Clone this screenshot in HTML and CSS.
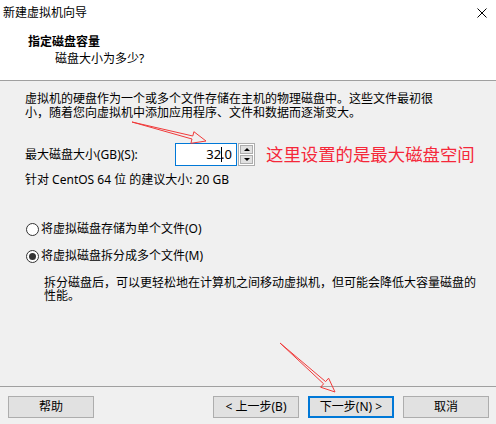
FILE: index.html
```html
<!DOCTYPE html>
<html lang="zh-CN">
<head>
<meta charset="utf-8">
<title>新建虚拟机向导</title>
<link rel="stylesheet" href="styles.css">
</head>
<body>
<div class="window">
  <header class="header">
    <div class="titlebar">
      <span class="title">新建虚拟机向导</span>
      <svg class="close" width="10" height="10" viewBox="0 0 10 10"><path d="M0.5 0.5 L9.5 9.5 M9.5 0.5 L0.5 9.5" stroke="#000" stroke-width="1" fill="none"/></svg>
    </div>
    <div class="heading">指定磁盘容量</div>
    <div class="subheading">磁盘大小为多少?</div>
  </header>

  <main class="content">
    <p class="intro">虚拟机的硬盘作为一个或多个文件存储在主机的物理磁盘中。这些文件最初很<br>小，随着您向虚拟机中添加应用程序、文件和数据而逐渐变大。</p>

    <div class="size-row">
      <span class="size-label">最大磁盘大小(GB)(S):</span>
      <div class="num-input">32<span class="caret"></span>.0</div>
      <div class="spinner">
        <span class="spin-btn"><span class="tri-up"></span></span>
        <span class="spin-btn"><span class="tri-down"></span></span>
      </div>
      <span class="annotation">这里设置的是最大磁盘空间</span>
    </div>

    <div class="recommend">针对 CentOS 64 位 的建议大小: 20 GB</div>

    <label class="radio-row first">
      <span class="radio"></span>
      <span>将虚拟磁盘存储为单个文件(O)</span>
    </label>
    <label class="radio-row second">
      <span class="radio checked"></span>
      <span>将虚拟磁盘拆分成多个文件(M)</span>
    </label>
    <p class="desc">拆分磁盘后，可以更轻松地在计算机之间移动虚拟机，但可能会降低大容量磁盘的<br>性能。</p>
  </main>

  <footer class="footer">
    <button class="btn">帮助</button>
    <div class="btn-group">
      <button class="btn">&lt; 上一步(B)</button>
      <button class="btn default">下一步(N) &gt;</button>
      <button class="btn">取消</button>
    </div>
  </footer>

  <svg class="arrows" width="496" height="424" viewBox="0 0 496 424">
    <polygon points="132,122 192.8,136 193.9,131.7 206,141 190.9,143.3 192,139" fill="none" stroke="#f03a3a" stroke-width="1" stroke-linejoin="miter"/>
    <polygon points="280,343 325.6,381.6 328.6,378.2 335,392 320.6,387.2 323.6,383.8" fill="none" stroke="#f03a3a" stroke-width="1" stroke-linejoin="miter"/>
  </svg>
</div>
</body>
</html>
```
FILE: styles.css
```css
html, body {
  margin: 0;
  padding: 0;
}
body {
  background: #f0f0f0;
  font-family: "Noto Sans", "Noto Sans CJK SC", sans-serif;
  font-size: 12px;
  color: #000;
}
.window {
  position: relative;
  width: 496px;
  height: 424px;
  display: flex;
  flex-direction: column;
  overflow: hidden;
}
.header {
  background: #fff;
  height: 80px;
  border-bottom: 1px solid #a0a0a0;
  flex: none;
}
.titlebar {
  height: 25px;
  display: flex;
  align-items: center;
  justify-content: space-between;
  padding: 0 9px 0 3px;
  line-height: 25px;
}
.close {
  display: block;
}
.heading {
  margin-top: 8px;
  padding-left: 28px;
  line-height: 17px;
  font-weight: bold;
}
.subheading {
  padding-left: 55px;
  line-height: 17px;
}
.content {
  flex: 1;
  padding: 11px 10px 0 25px;
}
.intro {
  margin: 0;
  line-height: 14px;
  white-space: nowrap;
}
.size-row {
  margin-top: 23px;
  display: flex;
  align-items: center;
  height: 22px;
}
.size-label {
  width: 150px;
  flex: none;
}
.num-input {
  box-sizing: border-box;
  width: 62px;
  height: 23px;
  border: 1px solid #0078d7;
  background: #fff;
  text-align: right;
  padding-right: 4px;
  font-size: 13px;
  line-height: 21px;
}
.caret {
  display: inline-block;
  width: 1px;
  height: 15px;
  background: #000;
  vertical-align: -3px;
  margin-right: -1px;
}
.spinner {
  margin-left: 1px;
  width: 17px;
  height: 23px;
  display: flex;
  flex-direction: column;
  box-sizing: border-box;
  border: 1px solid #adadad;
  background: #fff;
}
.spin-btn {
  flex: 1;
  margin: 1px;
  background: #e1e1e1;
  border: 1px solid #adadad;
  display: flex;
  align-items: center;
  justify-content: center;
}
.spin-btn + .spin-btn {
  margin-top: 0;
}
.tri-up {
  width: 0;
  height: 0;
  border-left: 3px solid transparent;
  border-right: 3px solid transparent;
  border-bottom: 3px solid #000;
}
.tri-down {
  width: 0;
  height: 0;
  border-left: 3px solid transparent;
  border-right: 3px solid transparent;
  border-top: 3px solid #000;
}
.annotation {
  margin-left: 11px;
  font-family: "Noto Sans CJK SC", sans-serif;
  font-size: 17.4px;
  color: #f5283a;
  line-height: 22px;
  white-space: nowrap;
}
.recommend {
  margin-top: 7px;
  line-height: 16px;
}
.radio-row {
  display: flex;
  align-items: center;
  line-height: 16px;
  height: 16px;
}
.radio-row.first {
  margin-top: 33px;
}
.radio-row.second {
  margin-top: 11px;
}
.radio {
  box-sizing: border-box;
  width: 13px;
  height: 13px;
  margin-left: 1px;
  margin-right: 2px;
  border: 1px solid #333;
  border-radius: 50%;
  background: #fff;
  display: flex;
  align-items: center;
  justify-content: center;
  flex: none;
}
.radio.checked::after {
  content: "";
  width: 7px;
  height: 7px;
  border-radius: 50%;
  background: #333;
}
.desc {
  margin: 12px 0 0 19px;
  line-height: 13px;
  white-space: nowrap;
}
.footer {
  flex: none;
  border-top: 1px solid #a0a0a0;
  padding: 9px 7px 6px 8px;
  display: flex;
  justify-content: space-between;
}
.btn-group {
  display: flex;
  gap: 9px;
}
.btn {
  box-sizing: border-box;
  width: 86px;
  height: 22px;
  margin: 0;
  padding: 0;
  background: #e1e1e1;
  border: 1px solid #adadad;
  font-family: inherit;
  font-size: 12px;
  line-height: 18px;
  color: #000;
}
.btn.default {
  border: 2px solid #0078d7;
}
.arrows {
  position: absolute;
  left: 0;
  top: 0;
  pointer-events: none;
}
```
